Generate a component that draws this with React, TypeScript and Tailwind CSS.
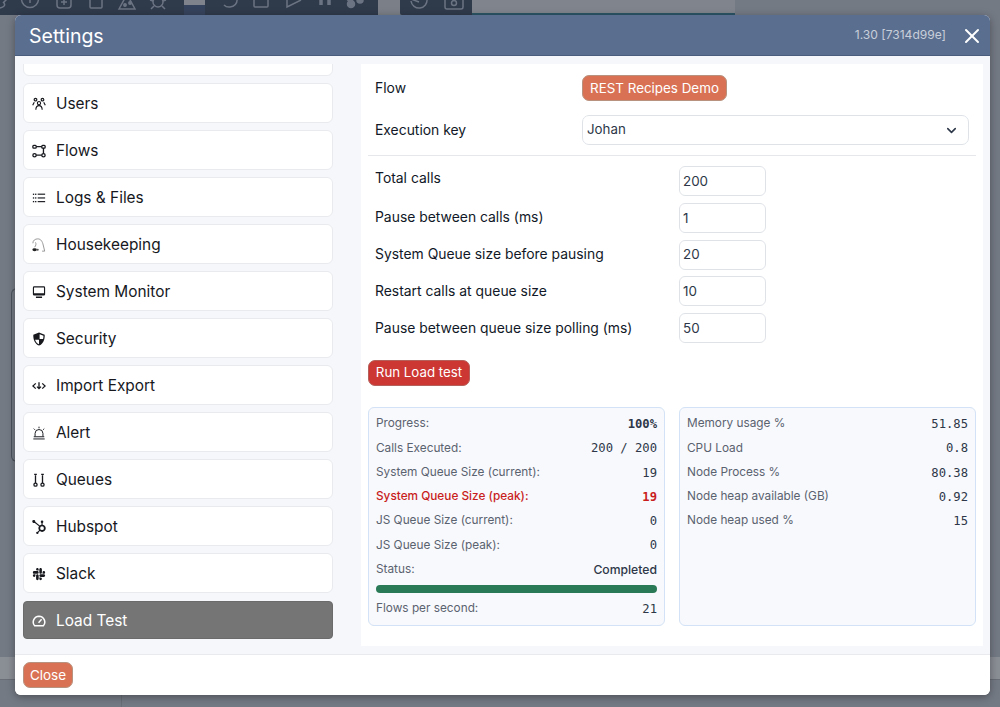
import { ChevronDown, X } from "lucide-react";
import { FaSlack } from "react-icons/fa";
import { SiHubspot } from "react-icons/si";
import type { ReactNode } from "react";

// =============================================================================
// Sidebar icons
// =============================================================================
const ICON = "h-[14px] w-[14px] shrink-0";

const UsersIcon = () => (
  <svg viewBox="0 0 16 16" className={ICON} fill="none" stroke="currentColor" strokeWidth="1.3">
    <circle cx="4" cy="3" r="1.500" />
    <circle cx="12" cy="3" r="1.500" />
    <circle cx="8" cy="7" r="1.800" />
    <path d="M.8 9.500 2.600 6M15.200 9.500 13.400 6M4.400 14.500c0-3.200 1.300-4.700 3.600-4.700s3.600 1.500 3.600 4.700" />
  </svg>
);

const FlowsIcon = () => (
  <svg viewBox="0 0 16 16" className={ICON} fill="none" stroke="currentColor" strokeWidth="1.500">
    <rect x="1" y="1.500" width="3.800" height="3.200" rx="1" />
    <rect x="11.200" y="1.500" width="3.800" height="3.200" rx="1" />
    <circle cx="2.900" cy="12.800" r="1.900" />
    <circle cx="13.100" cy="12.800" r="1.900" />
    <path d="M4.800 3.100h6.400M13.100 4.700v6.200M4.800 12.800h6.400" />
  </svg>
);

const LogsIcon = () => (
  <svg viewBox="0 0 16 16" className={ICON} fill="currentColor">
    <rect x="1" y="3" width="1.500" height="1.500" />
    <rect x="3.500" y="3" width="1.500" height="1.500" />
    <rect x="1" y="7.200" width="1.500" height="1.500" />
    <rect x="3.500" y="7.200" width="1.500" height="1.500" />
    <rect x="1" y="11.400" width="1.500" height="1.500" />
    <rect x="3.500" y="11.400" width="1.500" height="1.500" />
    <rect x="6.500" y="3" width="8.500" height="1.300" />
    <rect x="6.500" y="7.300" width="8.500" height="1.300" />
    <rect x="6.500" y="11.500" width="8.500" height="1.300" />
  </svg>
);

const VacuumIcon = () => (
  <svg viewBox="0 0 16 16" className={ICON} fill="none" stroke="#8a8a8a" strokeWidth="1">
    <path d="M1 6C1 2.800 3.500 1 6.500 1c3.800 0 5.300 3 6.300 7l1.700 7h-3M3 10.500C4.500 8.500 5 7 4 5" />
    <ellipse cx="3" cy="13.300" rx="2.600" ry="1.700" fill="#222" stroke="none" />
    <circle cx="6.500" cy="13.500" r="1.200" fill="#555" stroke="none" />
  </svg>
);

const MonitorIcon = () => (
  <svg viewBox="0 0 16 16" className={ICON} fill="currentColor">
    <path d="M2.500 1.500h11a1.500 1.500 0 0 1 1.500 1.500v7.500a1.500 1.500 0 0 1-1.500 1.500h-11A1.500 1.500 0 0 1 1 10.500V3a1.500 1.500 0 0 1 1.500-1.500Zm0 1.300a.3.300 0 0 0-.2.200v6.400h11.400V3a.3.300 0 0 0-.2-.2ZM4.500 13h7v1.800h-7Z" fillRule="evenodd" />
  </svg>
);

const ShieldIcon = () => (
  <svg viewBox="0 0 16 16" className={ICON}>
    <path d="M8 .5 14.500 3C14.700 9 12.700 13.500 8 15.500 3.300 13.500 1.300 9 1.500 3Z" fill="currentColor" />
    <path d="M8.700 2.600 13.100 4.300C13.100 5.400 13 6.800 12.700 7.900H8.700ZM8 8.800H3.500C4.100 10.900 5.400 12.700 7.300 13.600L8 14Z" fill="#fff" />
  </svg>
);

const ImportExportIcon = () => (
  <svg viewBox="0 0 16 16" className={ICON} fill="none" stroke="currentColor" strokeWidth="1.500">
    <path d="M4.300 5 1 8l3.300 3M11.700 5 15 8l-3.300 3M8 3.800V11M5.700 8.700 8 11l2.300-2.300" />
  </svg>
);

const AlertIcon = () => (
  <svg viewBox="0 0 16 16" className={ICON} fill="none" stroke="currentColor" strokeWidth="1.100">
    <path d="M3.500 12V8.500a4.500 4.500 0 0 1 9 0V12M1.500 14.800h13M2 12.300h12M8 .8v1.800M2 3l1.300 1.300M14 3l-1.300 1.300" />
  </svg>
);

const QueuesIcon = () => (
  <svg viewBox="0 0 16 16" className={ICON} fill="none" stroke="currentColor" strokeWidth="1.500">
    <circle cx="4" cy="13.300" r="1.800" />
    <circle cx="12" cy="13.300" r="1.800" />
    <path d="M4 11.500V2.500M2.500 1.500h3M12 11.500V2.500M10.500 1.500h3" />
  </svg>
);

const GaugeIcon = () => (
  <svg viewBox="0 0 16 16" className={ICON} fill="none" stroke="currentColor" strokeWidth="1.700">
    <path d="M3 13.500h10A6.700 6.700 0 0 0 8 2.500 6.700 6.700 0 0 0 3 13.500Z" />
    <path d="M7.500 10 11 6" />
  </svg>
);

// =============================================================================
// Data
// =============================================================================
const NAV: { label: string; icon: ReactNode }[] = [
  { label: "Users", icon: <UsersIcon /> },
  { label: "Flows", icon: <FlowsIcon /> },
  { label: "Logs & Files", icon: <LogsIcon /> },
  { label: "Housekeeping", icon: <VacuumIcon /> },
  { label: "System Monitor", icon: <MonitorIcon /> },
  { label: "Security", icon: <ShieldIcon /> },
  { label: "Import Export", icon: <ImportExportIcon /> },
  { label: "Alert", icon: <AlertIcon /> },
  { label: "Queues", icon: <QueuesIcon /> },
  { label: "Hubspot", icon: <SiHubspot className={ICON} /> },
  { label: "Slack", icon: <FaSlack className={ICON} /> },
];

const FIELDS = [
  { label: "Pause between calls (ms)", value: "1" },
  { label: "System Queue size before pausing", value: "20" },
  { label: "Restart calls at queue size", value: "10" },
  { label: "Pause between queue size polling (ms)", value: "50" },
];

const SYSTEM_STATS = [
  { label: "Memory usage %", value: "51.85" },
  { label: "CPU Load", value: "0.8" },
  { label: "Node Process %", value: "80.38" },
  { label: "Node heap available (GB)", value: "0.92" },
  { label: "Node heap used %", value: "15" },
];

const MONO = "font-['DejaVu_Sans_Mono','Liberation_Mono',monospace] text-[12.200px]";
const LABEL = "text-[13.900px] font-normal text-[#111827]";

function StatRow({ label, value, valueClass = "text-[#2d3748]", labelClass = "text-[#5a6270]" }: {
  label: string;
  value: string;
  valueClass?: string;
  labelClass?: string;
}) {
  return (
    <div className="flex h-[24.300px] items-center justify-between">
      <span className={`text-[11.800px] ${labelClass}`}>{label}</span>
      <span className={`${MONO} ${valueClass}`}>{value}</span>
    </div>
  );
}

function NavItem({ label, icon, active }: { label: string; icon?: ReactNode; active?: boolean }) {
  return (
    <div
      className={
        active
          ? "mt-[1px] flex h-[38px] shrink-0 items-center gap-[10px] rounded-[4px] border border-[#6b6b6b] bg-[#757575] pl-[8px] pt-[1px] text-[15.400px] text-white"
          : "flex h-[40px] shrink-0 items-center gap-[10px] rounded-[6px] border border-[#e8eaee] bg-white pl-[8px] pt-[1px] text-[15.400px] text-[#16181d]"
      }
    >
      {icon}
      <span>{label}</span>
    </div>
  );
}

// =============================================================================
// What is visible of the page behind the dialog
// =============================================================================
function Backdrop() {
  return (
    <div className="flex h-full flex-col bg-[#747a84]">
      <div className="flex h-[15px] shrink-0 items-stretch">
        <div className="flex w-[184px] items-end overflow-hidden bg-[#2f3a4b] text-[#6b7482]">
          <svg viewBox="0 0 184 15" className="h-[15px] w-[184px]" fill="none" stroke="currentColor" strokeWidth="1.500">
            <path d="M0 8c3-1 6-2 4-5M7 -1 3 3" />
            <circle cx="30" cy="-1" r="8.500" />
            <path d="M30 -2v5" />
            <rect x="57" y="-6" width="14" height="14" rx="3" />
            <path d="M64 -1v6M61 2h6" />
            <rect x="90" y="-5" width="12" height="13" rx="1" />
            <path d="M119 9 125 -2h4l6 11Z" />
            <circle cx="125" cy="5" r="1.200" fill="currentColor" />
            <circle cx="130" cy="3" r="1.200" fill="currentColor" />
            <circle cx="158" cy="2" r="5" />
            <path d="M151 9l3-3M165 9l-3-3M150 0l3 1M166 0l-3 1" />
          </svg>
        </div>
        <div className="flex w-[21px] flex-col">
          <div className="h-[5px] bg-[#7f848c]" />
          <div className="flex-1 bg-[#36435c]" />
        </div>
        <div className="flex w-[173px] items-end overflow-hidden bg-[#2f3a4b] text-[#6b7482]">
          <svg viewBox="0 0 173 15" className="h-[15px] w-[173px]" fill="none" stroke="currentColor" strokeWidth="1.500">
            <path d="M32 -1a7 7 0 0 1-7 8 7 7 0 0 1-6-2" />
            <rect x="49" y="-5" width="14" height="12" rx="1" />
            <path d="M82 -2v9l14-7" />
            <path d="M116 -2v7M124 -2v7" strokeWidth="3.500" />
            <circle cx="146" cy="4" r="3.500" fill="currentColor" />
            <circle cx="155" cy="0" r="3" fill="currentColor" />
            <circle cx="145" cy="-2" r="3" fill="currentColor" />
          </svg>
        </div>
        <div className="w-[22px] bg-[#7b8088]" />
        <div className="flex w-[72px] items-end overflow-hidden rounded-bl-[2px] bg-[#2f3a4b] text-[#6b7482]">
          <svg viewBox="0 0 72 15" className="h-[15px] w-[72px]" fill="none" stroke="currentColor" strokeWidth="1.500">
            <path d="M11 1a8 8 0 0 0 16-2M19 2 11 -1" />
            <rect x="45" y="-4" width="18" height="13" rx="2" />
            <circle cx="54" cy="3" r="2.500" />
          </svg>
        </div>
        <div className="flex w-[263px] flex-col justify-end bg-[#80858d]">
          <div className="h-[2px] bg-[#2c5566]" />
        </div>
      </div>
      <div className="flex min-h-0 flex-1 flex-col">
        <div className="flex-1 pt-[273px]">
          <div className="ml-[11px] h-[174px] w-[20px] rounded-l-[6px] border-y border-l border-[#4c525c]" />
        </div>
        <div className="h-[22px] shrink-0 bg-[#8a8e95]" />
        <div className="flex h-[28px] shrink-0 border-t border-[#696e77]">
          <div className="w-[122px] border-r border-[#696e77]" />
        </div>
      </div>
    </div>
  );
}

// =============================================================================
// App
// =============================================================================
export default function App() {
  return (
    <div className="relative h-[707px] w-[1000px] overflow-hidden font-['Inter',sans-serif]">
      <Backdrop />

      <div className="absolute left-[15px] top-[15px] flex h-[680px] w-[975px] flex-col overflow-hidden rounded-[6px] bg-white shadow-[0_2px_8px_rgba(0,0,0,0.35)]">
        {/* Header */}
        <div className="flex h-[41px] shrink-0 items-center justify-between border-b border-[#4a5d7c] bg-[#5a6e8f] pl-[14px] pr-[6px]">
          <span className="pt-[3px] text-[19.500px] text-white">Settings</span>
          <div className="flex items-center gap-[14px] pt-[1px]">
            <span className="text-[12.050px] text-[#c8cfda]">1.30 [7314d99e]</span>
            <X className="h-[24px] w-[24px] text-white" strokeWidth={2} />
          </div>
        </div>

        {/* Body */}
        <div className="flex min-h-0 flex-1 gap-[28px] border-b border-[#e8eaee] bg-[#f5f7fa] py-[8px] pl-[8px] pr-[7px]">
          <div className="flex w-[310px] shrink-0 flex-col gap-[7px] overflow-hidden">
            <div className="-mt-[28px] h-[40px] shrink-0 rounded-[6px] border border-[#e8eaee] bg-white" />
            {NAV.map((item) => (
              <NavItem key={item.label} label={item.label} icon={item.icon} />
            ))}
            <NavItem label="Load Test" icon={<GaugeIcon />} active />
          </div>

          <div className="min-w-0 flex-1 bg-white px-[7px] pt-[11px]">
            <div className="flex h-[26px] items-center pl-[7px]">
              <span className={`w-[207px] ${LABEL}`}>Flow</span>
              <span className="flex h-[26px] w-[145px] items-center justify-center rounded-[7px] border border-[#b9927f] bg-[#d97254] text-[13.400px] text-white">
                REST Recipes Demo
              </span>
            </div>
            <div className="mt-[14px] flex h-[30px] items-center pl-[7px]">
              <span className={`w-[207px] ${LABEL}`}>Execution key</span>
              <div className="flex h-[30px] w-[387px] items-center justify-between rounded-[7px] border border-[#dfe3e8] bg-white pl-[4px] pr-[9px] text-[13.300px] text-[#2d3748]">
                <span>Johan</span>
                <ChevronDown className="h-[15px] w-[15px] text-[#2d3748]" strokeWidth={2.500} />
              </div>
            </div>
            <div className="mb-[10px] mt-[10px] border-t border-[#e5e7eb]" />

            <div className="flex flex-col gap-[6.750px]">
              <div className="flex h-[30px] pl-[7px]">
                <span className={`w-[304px] pt-[2px] ${LABEL}`}>Total calls</span>
                <div className="flex h-[30px] w-[87px] items-center rounded-[6px] border border-[#dfe3e8] pl-[3px] text-[13.400px] text-[#2d3748]">200</div>
              </div>
              {FIELDS.map((f) => (
                <div key={f.label} className="flex h-[30px] items-center pl-[7px]">
                  <span className={`w-[304px] ${LABEL}`}>{f.label}</span>
                  <div className="flex h-[30px] w-[87px] items-center rounded-[6px] border border-[#dfe3e8] pl-[3px] text-[13.400px] text-[#2d3748]">{f.value}</div>
                </div>
              ))}
            </div>

            <div className="mt-[17px] flex h-[26px] w-[102px] items-center justify-center rounded-[7px] border border-[#b5605a] bg-[#cc3633] text-[13.300px] text-white">
              Run Load test
            </div>

            <div className="mt-[21px] flex gap-[14px]">
              <div className="h-[219px] w-[297px] rounded-[6px] border border-[#d3e2f6] bg-[#f8f9fc] px-[7px] pt-[4px]">
                <StatRow label="Progress:" value="100%" valueClass="font-bold text-[#2d3748]" />
                <StatRow label="Calls Executed:" value="200 / 200" />
                <StatRow label="System Queue Size (current):" value="19" />
                <StatRow label="System Queue Size (peak):" value="19" labelClass="font-medium text-[#c81e1e]" valueClass="font-bold text-[#c81e1e]" />
                <StatRow label="JS Queue Size (current):" value="0" />
                <StatRow label="JS Queue Size (peak):" value="0" />
                <div className="flex h-[24.300px] items-center justify-between">
                  <span className="text-[11.800px] text-[#5a6270]">Status:</span>
                  <span className="text-[12.200px] font-medium text-[#2d3748]">Completed</span>
                </div>
                <div className="mt-[3px] h-[8px] rounded-full bg-[#2a7a57]" />
                <div className="mt-[4px]">
                  <StatRow label="Flows per second:" value="21" />
                </div>
              </div>

              <div className="h-[219px] w-[297px] rounded-[6px] border border-[#d3e2f6] bg-[#f8f9fc] px-[7px] pt-[4px]">
                {SYSTEM_STATS.map((s) => (
                  <StatRow key={s.label} label={s.label} value={s.value} />
                ))}
              </div>
            </div>
          </div>
        </div>

        {/* Footer */}
        <div className="flex h-[40px] shrink-0 items-center bg-white pl-[8px]">
          <span className="flex h-[26px] w-[50px] items-center justify-center rounded-[7px] border border-[#b9927f] bg-[#d97254] text-[13.500px] text-white">
            Close
          </span>
        </div>
      </div>
    </div>
  );
}
